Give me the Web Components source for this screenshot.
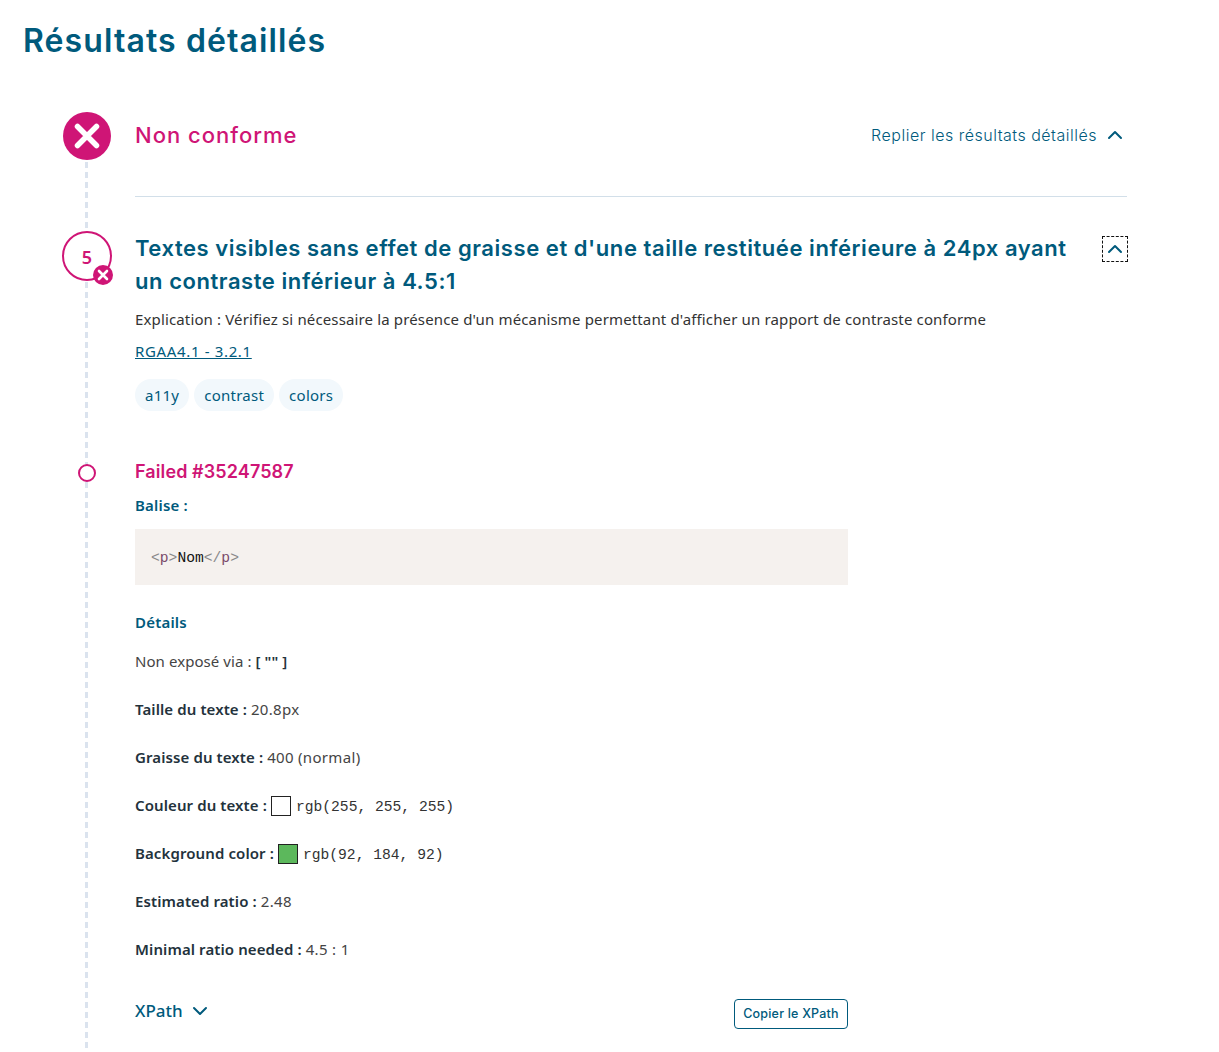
<!DOCTYPE html>
<html lang="fr"><head><meta charset="utf-8"><title>Résultats détaillés</title>
<style>
html,body{margin:0;background:#fff}
body{font-family:"Noto Sans",Roboto,sans-serif;color:#2b2b2b;height:1052px;overflow:hidden}
</style></head><body>
<audit-page></audit-page>
<script>
const HEAD='Inter,"Open Sans",sans-serif';
const BODY='"Noto Sans",Roboto,sans-serif';
const MONO='"Liberation Mono","DejaVu Sans Mono",monospace';
const BLUE='#005a7c',PINK='#cf1576';
const chevUp=`<svg width="16" height="10" viewBox="0 0 16 10" fill="none" stroke="${BLUE}" stroke-width="2" stroke-linecap="round" stroke-linejoin="round"><path d="M2 8l6-6 6 6"/></svg>`;
const chevDown=`<svg width="16" height="10" viewBox="0 0 16 10" fill="none" stroke="${BLUE}" stroke-width="2" stroke-linecap="round" stroke-linejoin="round"><path d="M2 2l6 6 6-6"/></svg>`;
function def(name,html){
  customElements.define(name,class extends HTMLElement{
    constructor(){super();this.attachShadow({mode:'open'}).innerHTML=html;}
  });
}
def('tag-chip',`<style>:host{display:inline-block;background:#f2f8fc;color:${BLUE};border-radius:16px;height:32px;padding:0 10px;font:15px/33px ${BODY};letter-spacing:.25px}</style><slot></slot>`);
def('detail-line',`<style>:host{display:flex;align-items:center;height:24px;box-sizing:border-box;padding-bottom:2px;margin-bottom:24px;font:15px/22px ${BODY};color:#444;white-space:pre;letter-spacing:.32px}
::slotted(b){font-weight:600;color:#23323c;letter-spacing:.1px}
::slotted(code){font:14.65px/22px ${MONO};color:#333;letter-spacing:0;padding-top:4px}
::slotted(i){display:inline-block;width:18px;height:18px;border:1px solid #222;margin:2px 5px 0 4px}</style><slot></slot>`);
def('audit-page',`<style>
:host{display:block;height:1052px;box-sizing:border-box;padding:0 0 0 23px;position:relative;overflow:hidden}
h1{margin:0;padding-top:19px;height:112px;box-sizing:border-box;font:600 32px/44px ${HEAD};color:${BLUE};letter-spacing:1.1px}
.wrap{position:relative;margin-left:40px;width:1064px}
.rail{position:absolute;left:22px;top:50px;height:886px;width:3px;background:repeating-linear-gradient(to bottom,#dbe3ee 0 6px,transparent 6px 10px)}
.row{display:grid;grid-template-columns:48px 1fr;column-gap:24px;position:relative}
.main{width:992px}
.big{width:48px;height:48px;border-radius:50%;background:${PINK};display:flex;align-items:center;justify-content:center}
.status{display:flex;align-items:center;justify-content:space-between;height:48px;box-sizing:border-box;padding:0 4px 2px 0}
.nc{font:500 22px/46px ${HEAD};color:${PINK};letter-spacing:1px}
.fold{display:flex;align-items:center;gap:10px;font:300 16px/24px ${HEAD};color:${BLUE};letter-spacing:.5px}
.hr{height:1px;background:#d2dfe9;margin:36px 0 0}
.num{position:relative;width:50px;height:50px;box-sizing:border-box;margin:34px 0 0 -1px;border:2px solid ${PINK};border-radius:50%;background:#fff;font:600 18px/48px ${BODY};color:${PINK};text-align:center}
.badge{position:absolute;right:-3px;bottom:-6px;width:20px;height:20px;border-radius:50%;background:${PINK};display:flex;align-items:center;justify-content:center}
.head{display:flex;justify-content:space-between;align-items:flex-start;padding-top:35px}
h2{margin:0;width:945px;font:600 22px/33px ${HEAD};color:${BLUE};letter-spacing:.56px}
.tgl{width:26px;height:26px;box-sizing:border-box;border:1px dashed #111;margin:4px -1px 0 0;display:flex;align-items:center;justify-content:center}
p.ex{margin:9px 0 0;font:15px/24px ${BODY};color:#333;letter-spacing:.14px}
a{display:inline-block;margin-top:8px;font:15px/24px ${BODY};color:${BLUE};letter-spacing:.65px}
.tags{display:flex;gap:5px;margin-top:16px}
.dot{width:18px;height:18px;box-sizing:border-box;border:2px solid ${PINK};border-radius:50%;background:#fff;margin:53px 0 0 15px}
.failed h3{margin:48px 0 0;font:600 18px/26px ${HEAD};color:${PINK};letter-spacing:.1px}
.lbl{font:600 15px/24px ${BODY};color:${BLUE};letter-spacing:.2px}
.balise{margin-top:8px}
.codebox{width:713px;height:56px;box-sizing:border-box;margin-top:12px;padding:0 16px;background:#f5f1ee;font:14.65px/58px ${MONO};color:#8a8a8a}
.codebox b{font-weight:400;color:#7a4a6a}.codebox span{color:#111}
.det{margin-top:25px;margin-bottom:16px}
.xp{width:713px;display:flex;justify-content:space-between;align-items:center;margin-top:33px;height:32px}
.xl{display:flex;align-items:center;gap:9px;font:500 17px/24px ${BODY};color:${BLUE}}
button{width:114px;height:30px;margin-top:6px;background:#fff;border:1px solid ${BLUE};border-radius:4px;padding:0;font:500 12.5px/28px ${HEAD};color:${BLUE};letter-spacing:.2px}
</style>
<h1>Résultats détaillés</h1>
<div class="wrap"><div class="rail"></div>
 <div class="row">
  <div class="big"><svg width="26" height="26" viewBox="0 0 26 26" fill="none" stroke="#fff" stroke-width="5.500" stroke-linecap="round"><path d="M3.500 3.500l19 19M22.500 3.500l-19 19"/></svg></div>
  <div class="main"><div class="status"><span class="nc">Non conforme</span><span class="fold">Replier les résultats détaillés ${chevUp}</span></div><div class="hr"></div></div>
 </div>
 <div class="row">
  <div><div class="num">5<span class="badge"><svg width="12" height="12" viewBox="0 0 12 12" fill="none" stroke="#fff" stroke-width="2.600" stroke-linecap="round"><path d="M2 2l8 8M10 2l-8 8"/></svg></span></div></div>
  <div class="main">
   <div class="head"><h2>Textes visibles sans effet de graisse et d'une taille restituée inférieure à 24px ayant un contraste inférieur à 4.5:1</h2><div class="tgl">${chevUp}</div></div>
   <p class="ex">Explication : Vérifiez si nécessaire la présence d'un mécanisme permettant d'afficher un rapport de contraste conforme</p>
   <a href="#">RGAA4.1 - 3.2.1</a>
   <div class="tags"><tag-chip>a11y</tag-chip><tag-chip>contrast</tag-chip><tag-chip>colors</tag-chip></div>
  </div>
 </div>
 <div class="row">
  <div><div class="dot"></div></div>
  <div class="main failed">
   <h3>Failed #35247587</h3>
   <div class="lbl balise">Balise :</div>
   <div class="codebox">&lt;<b>p</b>&gt;<span>Nom</span>&lt;/<b>p</b>&gt;</div>
   <div class="lbl det">Détails</div>
   <detail-line style="letter-spacing:.07px">Non exposé via : <b>[ "" ]</b></detail-line>
   <detail-line><b>Taille du texte : </b>20.8px</detail-line>
   <detail-line><b>Graisse du texte : </b>400 (normal)</detail-line>
   <detail-line><b>Couleur du texte :</b><i style="background:#fff"></i><code>rgb(255, 255, 255)</code></detail-line>
   <detail-line><b>Background color :</b><i style="background:#5cb85c"></i><code>rgb(92, 184, 92)</code></detail-line>
   <detail-line><b>Estimated ratio : </b>2.48</detail-line>
   <detail-line><b>Minimal ratio needed : </b>4.5 : 1</detail-line>
   <div class="xp"><span class="xl">XPath ${chevDown}</span><button>Copier le XPath</button></div>
  </div>
 </div>
</div>`);
</script></body></html>
